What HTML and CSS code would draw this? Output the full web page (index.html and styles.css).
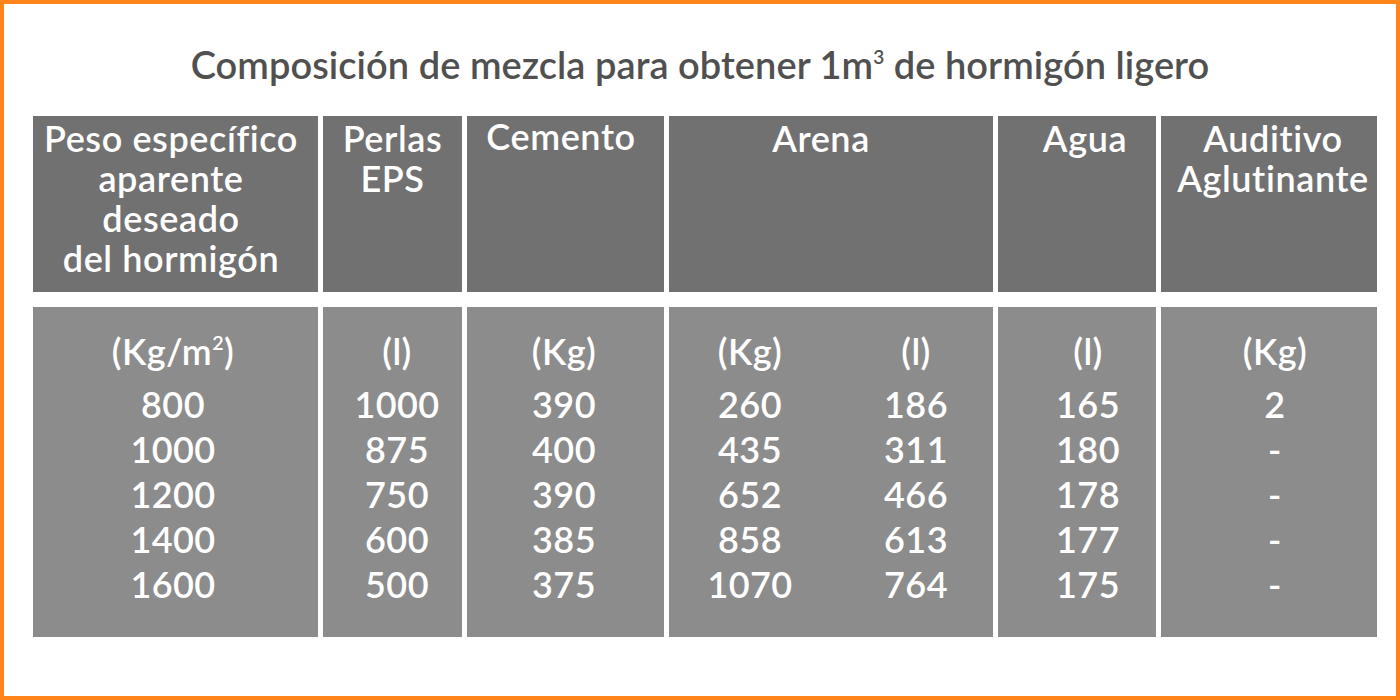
FILE: index.html
```html
<!DOCTYPE html>
<html lang="es">
<head>
<meta charset="utf-8">
<title>Composición de mezcla</title>
<link rel="stylesheet" href="styles.css">
</head>
<body>
<div class="frame">
  <h1 class="title">Composición de mezcla para obtener 1m<sup>3</sup> de hormigón ligero</h1>
  <div class="table">
    <div class="head h1c">Peso específico<br>aparente<br>deseado<br>del hormigón</div>
    <div class="head h2c">Perlas<br>EPS</div>
    <div class="head h3c">Cemento</div>
    <div class="head h4c">Arena</div>
    <div class="head h5c">Agua</div>
    <div class="head h6c">Auditivo<br>Aglutinante</div>

    <div class="cell c1">
      <div class="unit">(Kg/m<sup>2</sup>)</div>
      <div>800</div><div>1000</div><div>1200</div><div>1400</div><div>1600</div>
    </div>
    <div class="cell c2">
      <div class="unit">(l)</div>
      <div>1000</div><div>875</div><div>750</div><div>600</div><div>500</div>
    </div>
    <div class="cell c3">
      <div class="unit">(Kg)</div>
      <div>390</div><div>400</div><div>390</div><div>385</div><div>375</div>
    </div>
    <div class="cell c4">
      <div class="sub sub-a">
        <div class="unit">(Kg)</div>
        <div>260</div><div>435</div><div>652</div><div>858</div><div>1070</div>
      </div>
      <div class="sub sub-b">
        <div class="unit">(l)</div>
        <div>186</div><div>311</div><div>466</div><div>613</div><div>764</div>
      </div>
    </div>
    <div class="cell c5">
      <div class="unit">(l)</div>
      <div>165</div><div>180</div><div>178</div><div>177</div><div>175</div>
    </div>
    <div class="cell c6">
      <div class="unit">(Kg)</div>
      <div>2</div><div>-</div><div>-</div><div>-</div><div>-</div>
    </div>
  </div>
</div>
</body>
</html>
```
FILE: styles.css
```css
html, body {
  margin: 0;
  padding: 0;
  background: #ffffff;
}

.frame {
  box-sizing: border-box;
  width: 1400px;
  height: 700px;
  border: 4px solid #ff8419;
  padding: 0 0 0 29px;
  font-family: "Lato", "Liberation Sans", sans-serif;
  font-weight: 600;
}

.title {
  margin: 0 0 0 -29px;
  padding: 37px 0 0 0;
  height: 75px;
  text-align: center;
  font-size: 38px;
  line-height: 46px;
  font-weight: 600;
  letter-spacing: 0.05px;
  color: #505050;
}

.title sup {
  font-size: 0.5em;
  line-height: 0;
  vertical-align: 0.8em;
}

.unit sup {
  font-size: 0.55em;
  line-height: 0;
  vertical-align: 0.75em;
}

.table {
  display: grid;
  grid-template-columns: 285px 139px 197px 324px 158px 216px;
  grid-template-rows: 176px 330px;
  column-gap: 5px;
  row-gap: 15px;
}

.head {
  background: #717171;
  color: #ffffff;
  text-align: center;
  font-size: 36px;
  line-height: 40px;
  letter-spacing: 0.6px;
  padding-top: 2px;
}

.h1c { padding-right: 9px; }
.h3c { padding-top: 0; padding-right: 9px; }
.h4c { padding-right: 20px; }
.h5c { padding-left: 16px; }
.h6c { padding-left: 8px; }

.cell {
  background: #8c8c8c;
  color: #ffffff;
  text-align: center;
  font-size: 36px;
  line-height: 45px;
  letter-spacing: 0.4px;
  padding-top: 22px;
}

.unit {
  margin-bottom: 8px;
}

.c1 { padding-right: 5px; }
.c2 { padding-left: 9px; }
.c3 { padding-right: 3px; }
.c5 { padding-left: 22px; }
.c6 { padding-left: 12px; }

.c4 {
  display: grid;
  grid-template-columns: 162px 162px;
}

.sub-b { padding-left: 8px; }
```
